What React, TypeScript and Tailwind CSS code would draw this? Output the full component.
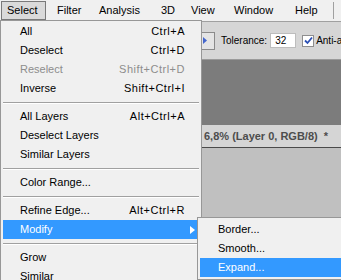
import React from "react";

type Item =
  | { sep: true }
  | { label: string; sc?: string; disabled?: boolean; active?: boolean; sub?: boolean };

const selectMenu: Item[] = [
  { label: "All", sc: "Ctrl+A" },
  { label: "Deselect", sc: "Ctrl+D" },
  { label: "Reselect", sc: "Shift+Ctrl+D", disabled: true },
  { label: "Inverse", sc: "Shift+Ctrl+I" },
  { sep: true },
  { label: "All Layers", sc: "Alt+Ctrl+A" },
  { label: "Deselect Layers" },
  { label: "Similar Layers" },
  { sep: true },
  { label: "Color Range..." },
  { sep: true },
  { label: "Refine Edge...", sc: "Alt+Ctrl+R" },
  { label: "Modify", active: true, sub: true },
  { sep: true },
  { label: "Grow" },
  { label: "Similar" },
];

const modifyMenu = [
  { label: "Border..." },
  { label: "Smooth..." },
  { label: "Expand...", active: true },
];

const menubar = [
  { label: "Filter", w: "w-[42px]" },
  { label: "Analysis", w: "w-[62px]" },
  { label: "3D", w: "w-[30px]" },
  { label: "View", w: "w-[43px]" },
  { label: "Window", w: "w-[61px]" },
  { label: "Help", w: "w-[38px]" },
];

const Separator = () => (
  <div className="h-[9px] pt-[4px]">
    <div className="h-px bg-[#a0a0a0]" />
    <div className="h-px bg-white" />
  </div>
);

const App = () => {
  return (
    <div className="relative h-[280px] w-[341px] overflow-hidden bg-[#c0c0c0] font-['Liberation_Sans',Arial,sans-serif] text-[11px] text-black">
      {/* menu bar */}
      <div className="flex h-[22px] items-start border-b border-[#a0a0a0] bg-[#f0f0f0] pl-px">
        <div className="mt-px flex h-[19px] w-[45px] shrink-0 items-center border border-[#7a7a7a] bg-[#dadada] pl-[5px]">
          Select
        </div>
        <div className="ml-[11px] flex shrink-0">
          {menubar.map((m) => (
            <div key={m.label} className={`flex h-[21px] items-center ${m.w}`}>
              {m.label}
            </div>
          ))}
        </div>
        <div className="mt-[2px] h-[17px] w-px shrink-0 bg-[#a0a0a0]" />
      </div>

      {/* options bar */}
      <div className="flex h-[38px] items-center overflow-hidden whitespace-nowrap border-b border-[#9a9a9a] bg-[#d6d6d6] text-[10px]">
        <div className="ml-[193px] flex h-[18px] w-[22px] shrink-0 items-center justify-end border border-[#8a8a8a] bg-[#e4e4e4] pr-[7px]">
          <svg width="4" height="7" viewBox="0 0 4 7">
            <path d="M0 0 L4 3.5 L0 7 Z" fill="#4466cc" />
          </svg>
        </div>
        <span className="ml-[6px] shrink-0">Tolerance:</span>
        <div className="ml-[3px] flex h-[15px] w-[26px] shrink-0 items-center border border-[#bdbdbd] bg-white pl-[4px]">
          32
        </div>
        <div className="ml-[6px] flex h-[12px] w-[12px] shrink-0 items-center justify-center border border-[#8e8e8e] bg-white">
          <svg width="9" height="9" viewBox="0 0 9 9">
            <path d="M1 4.5 L3.5 7 L8 1.5" fill="none" stroke="#2a4fb4" strokeWidth="1.8" />
          </svg>
        </div>
        <span className="ml-[2px] shrink-0">Anti-alias</span>
      </div>

      {/* document area */}
      <div className="h-[65px] bg-[#7c7c7c]" />
      <div className="flex h-[23px] items-center border-b border-[#4a4a4a] bg-[#d5d5d5] pl-[204px] font-bold text-[#4d4d4d]">
        <span>6,8% (Layer 0, RGB/8)</span>
        <span className="ml-[6px]">*</span>
      </div>

      {/* Select dropdown */}
      <div className="absolute left-0 top-[20px] w-[202px] border border-[#979797] bg-[#f0f0f0] px-[2px] py-px">
        {selectMenu.map((it, i) =>
          "sep" in it ? (
            <Separator key={i} />
          ) : (
            <div
              key={i}
              className={`flex h-[19px] items-center pl-[17px] pr-[14px] ${
                it.active ? "bg-[#3399ff] text-white" : it.disabled ? "text-[#8d8d8d]" : ""
              }`}
            >
              <span>{it.label}</span>
              {it.sc && <span className="ml-auto tracking-[0.5px]">{it.sc}</span>}
              {it.sub && (
                <svg className="-mr-[10px] ml-auto" width="5" height="8" viewBox="0 0 5 8">
                  <path d="M0 0 L5 4 L0 8 Z" fill="#ffffff" />
                </svg>
              )}
            </div>
          )
        )}
      </div>

      {/* Modify submenu */}
      <div className="absolute left-[197px] top-[217px] w-[160px] border border-[#979797] bg-[#f0f0f0] p-[2px]">
        {modifyMenu.map((it) => (
          <div
            key={it.label}
            className={`flex h-[19px] items-center pl-[18px] pr-[14px] ${
              it.active ? "bg-[#3399ff] text-white" : ""
            }`}
          >
            <span>{it.label}</span>
          </div>
        ))}
      </div>
    </div>
  );
};

export default App;
